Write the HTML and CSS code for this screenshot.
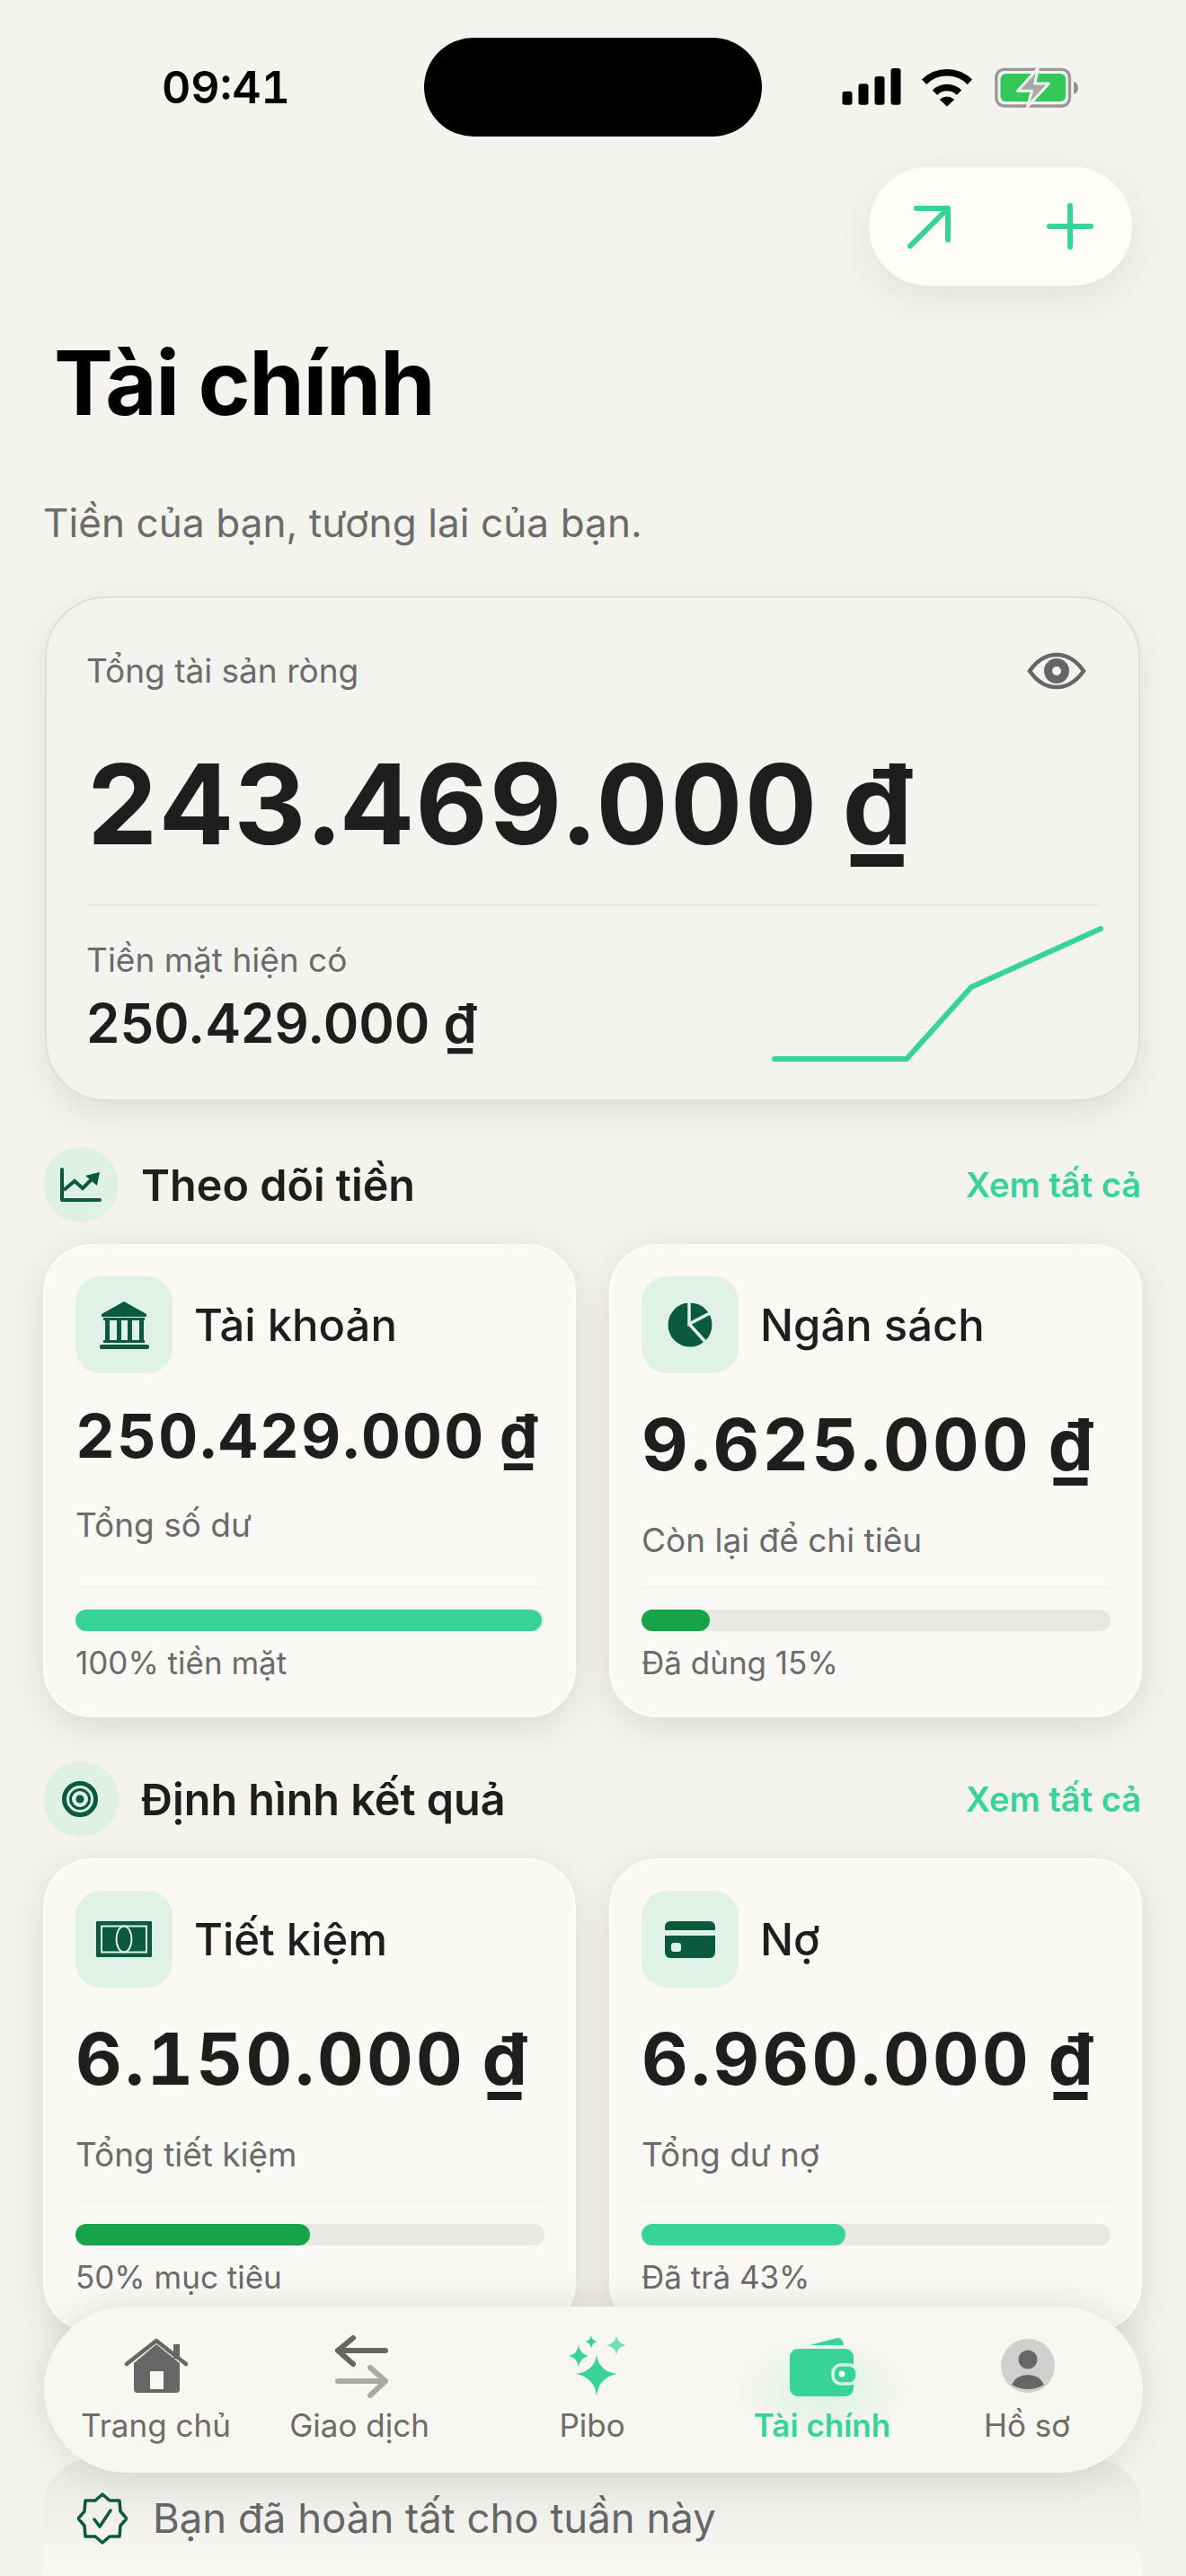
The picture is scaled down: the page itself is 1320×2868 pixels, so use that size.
FILE: index.html
```html
<!DOCTYPE html>
<html lang="vi">
<head>
    <meta charset="UTF-8">
    <meta name="viewport" content="width=device-width, initial-scale=1.0">
    <title>Tài chính</title>
    <link rel="stylesheet" href="styles.css">
</head>
<body>
    <!-- Thanh trạng thái -->
    <div class="status">
        <span class="time">09:41</span>
        <div class="island"></div>
        <div class="status-icons">
            <svg width="66" height="42" viewBox="172 108 195 126"><rect x="172" y="185" width="33" height="45" rx="8"/><rect x="226" y="160" width="33" height="70" rx="8"/><rect x="280" y="135" width="33" height="95" rx="8"/><rect x="334" y="108" width="33" height="122" rx="8"/></svg>
            <svg width="58" height="43" viewBox="432 102 176 130"><g fill="none" stroke="#000" stroke-width="23"><path d="M443 148 A109 109 0 0 1 597 148"/><path d="M479 184 A58 58 0 0 1 561 184"/></g><path d="M520 231 L495 207 Q520 188 545 207Z"/></svg>
            <svg class="battery" width="97" height="48" viewBox="670 95 290 144"><rect x="681" y="108" width="245" height="122" rx="26" fill="none" stroke="#999896" stroke-width="10"/><rect x="695" y="122" width="218" height="93" rx="18" fill="#34c759"/><path d="M940 148 Q954 152 954 169 Q954 186 940 190Z" fill="#8f8e8c"/><path d="M820 105 L752 180 H800 L785 232 L857 155 H810Z" fill="#a9a8a6" stroke="#f5f3ee" stroke-width="9" stroke-linejoin="round"/></svg>
        </div>
    </div>

    <div class="actions">
        <div class="pill">
            <svg width="52" height="52" viewBox="0 0 52 52"><path d="M5 48 L47 6 M12 6 H47 V41"/></svg>
            <svg width="58" height="58" viewBox="0 0 58 58"><path d="M29 6 V52 M6 29 H52"/></svg>
        </div>
    </div>

    <h1>Tài chính</h1>
    <p class="subtitle">Tiền của bạn, tương lai của bạn.</p>

    <!-- Tổng tài sản -->
    <section class="hero">
        <div class="hero-top">
            <span class="hero-label">Tổng tài sản ròng</span>
            <svg class="eye" width="66" height="42" viewBox="0 0 66 42"><path d="M3 21 C12 8 22 3 33 3 C44 3 54 8 63 21 C54 34 44 39 33 39 C22 39 12 34 3 21Z" fill="none" stroke="#666" stroke-width="4.5"/><circle cx="33" cy="21" r="9.5" fill="none" stroke="#666" stroke-width="9"/></svg>
        </div>
        <div class="hero-amount">243.469.000 ₫</div>
        <div class="hero-bottom">
            <div>
                <div class="hero-label">Tiền mặt hiện có</div>
                <div class="hero-cash">250.429.000 ₫</div>
            </div>
            <svg class="spark" width="369" height="151" viewBox="0 0 369 151"><path d="M3 148 H150 L222 68 L366 3"/></svg>
        </div>
    </section>

    <!-- Theo dõi tiền -->
    <section class="block block-first">
        <div class="block-head">
            <span class="round-icon">
                <svg width="84" height="84" viewBox="0 0 84 84"><path d="M21 25 V59 H63" fill="none" stroke="#0b5a3f" stroke-width="4" stroke-linecap="round" stroke-linejoin="round"/><path d="M23 48 L35 38 L44 46 L54 36" fill="none" stroke="#0b5a3f" stroke-width="4"/><path d="M47 32 L63 28 L60 43Z" fill="#0b5a3f"/></svg>
            </span>
            <h2>Theo dõi tiền</h2>
            <a class="see-all">Xem tất cả</a>
        </div>
        <div class="cards">
            <div class="card">
                <div class="card-head">
                    <span class="square-icon">
                        <svg width="108" height="108" viewBox="0 0 108 108" fill="#0b5a3f"><path d="M54 28 L79 42 V45 H29 V42Z"/><rect x="31" y="46" width="46" height="3"/><rect x="33" y="49" width="5" height="22"/><rect x="46" y="49" width="5" height="22"/><rect x="58" y="49" width="5" height="22"/><rect x="71" y="49" width="5" height="22"/><rect x="31" y="71" width="46" height="3"/><rect x="27" y="76" width="55" height="5" rx="2"/></svg>
                    </span>
                    <span class="card-title">Tài khoản</span>
                </div>
                <div class="value value-small">250.429.000 ₫</div>
                <div class="note">Tổng số dư</div>
                <div class="card-foot">
                    <div class="track"><div class="fill fill-mint" style="width:99.5%"></div></div>
                    <div class="caption">100% tiền mặt</div>
                </div>
            </div>
            <div class="card">
                <div class="card-head">
                    <span class="square-icon">
                        <svg width="108" height="108" viewBox="0 0 108 108"><circle cx="54" cy="54" r="24.5" fill="#0b5a3f"/><path d="M53 28 V53 L78 40 M53 53 L72 74" fill="none" stroke="#e0f2e8" stroke-width="3.5"/></svg>
                    </span>
                    <span class="card-title">Ngân sách</span>
                </div>
                <div class="value">9.625.000 ₫</div>
                <div class="note">Còn lại để chi tiêu</div>
                <div class="card-foot">
                    <div class="track"><div class="fill fill-green" style="width:14.6%"></div></div>
                    <div class="caption">Đã dùng 15%</div>
                </div>
            </div>
        </div>
    </section>

    <!-- Định hình kết quả -->
    <section class="block">
        <div class="block-head">
            <span class="round-icon">
                <svg width="84" height="84" viewBox="0 0 84 84" fill="none" stroke="#0b5a3f"><circle cx="41" cy="42" r="17.5" stroke-width="5"/><circle cx="41" cy="42" r="10.5" stroke-width="3"/><circle cx="41" cy="42" r="4.5" fill="#0b5a3f" stroke="none"/></svg>
            </span>
            <h2>Định hình kết quả</h2>
            <a class="see-all">Xem tất cả</a>
        </div>
        <div class="cards">
            <div class="card">
                <div class="card-head">
                    <span class="square-icon">
                        <svg width="108" height="108" viewBox="0 0 108 108"><rect x="23" y="34" width="62" height="40" fill="#0b5a3f" rx="1"/><g fill="none" stroke="#e0f2e8" stroke-width="2"><rect x="29" y="39.5" width="50" height="29"/><ellipse cx="54" cy="54" rx="8.5" ry="14.5"/></g></svg>
                    </span>
                    <span class="card-title">Tiết kiệm</span>
                </div>
                <div class="value">6.150.000 ₫</div>
                <div class="note">Tổng tiết kiệm</div>
                <div class="card-foot">
                    <div class="track"><div class="fill fill-green" style="width:50%"></div></div>
                    <div class="caption">50% mục tiêu</div>
                </div>
            </div>
            <div class="card">
                <div class="card-head">
                    <span class="square-icon">
                        <svg width="108" height="108" viewBox="0 0 108 108"><rect x="26" y="34" width="56" height="41" rx="6" fill="#0b5a3f"/><rect x="26" y="44" width="56" height="6" fill="#e0f2e8"/><rect x="33" y="58" width="11" height="10" rx="3" fill="#e0f2e8"/></svg>
                    </span>
                    <span class="card-title">Nợ</span>
                </div>
                <div class="value">6.960.000 ₫</div>
                <div class="note">Tổng dư nợ</div>
                <div class="card-foot">
                    <div class="track"><div class="fill fill-mint" style="width:43.5%"></div></div>
                    <div class="caption">Đã trả 43%</div>
                </div>
            </div>
        </div>
    </section>

    <div class="done">
        <svg width="56" height="58" viewBox="-28 -29 56 58"><path d="M0 -27 L8 -20 L19 -20 L20 -8 L27 0 L20 8 L19 20 L8 20 L0 27 L-8 20 L-19 20 L-20 8 L-27 0 L-20 -8 L-19 -20 L-8 -20Z" fill="none" stroke="#0b5a3f" stroke-width="3.5" stroke-linejoin="round"/><path d="M-9 1 L-3 9 L9 -9" fill="none" stroke="#0b5a3f" stroke-width="3.5" stroke-linecap="round" stroke-linejoin="round"/></svg>
        <span>Bạn đã hoàn tất cho tuần này</span>
    </div>

    <!-- Thanh điều hướng -->
    <nav class="tabbar">
        <div class="tab">
            <svg width="80" height="70" viewBox="134 2600 80 70"><path d="M149 2631 L174 2610 L200 2631 V2660 Q200 2664 196 2664 H153 Q149 2664 149 2660Z" fill="#666"/><rect x="167" y="2640" width="15" height="20" fill="#f9f7f2"/><path d="M141 2632 L174 2606 L207 2632" fill="none" stroke="#666" stroke-width="4.5" stroke-linecap="round" stroke-linejoin="round"/><rect x="193" y="2610" width="7" height="16" fill="#666"/></svg>
            <span>Trang chủ</span>
        </div>
        <div class="tab">
            <svg width="80" height="70" viewBox="360 2600 80 70" fill="none" stroke-width="6" stroke-linecap="round" stroke-linejoin="round"><path d="M429 2617 H376 M393 2603 L376 2617 L393 2632" stroke="#666"/><path d="M376 2651 H429 M412 2636 L429 2651 L412 2667" stroke="#aaa9a6"/></svg>
            <span>Giao dịch</span>
        </div>
        <div class="tab">
            <svg width="80" height="70" viewBox="619 2600 80 70" fill="#37d39a"><path d="M664 2621 Q666 2640 687 2643 Q666 2647 664 2668 Q662 2647 641 2643 Q662 2640 664 2621Z"/><path d="M644 2610 Q645 2621 655 2623 Q645 2625 644 2636 Q643 2625 633 2623 Q643 2621 644 2610Z"/><path d="M658 2600 Q659 2606 665 2607 Q659 2608 658 2615 Q657 2608 651 2607 Q657 2606 658 2600Z"/><path d="M686 2600 Q687 2609 697 2611 Q687 2613 686 2622 Q685 2613 675 2611 Q685 2609 686 2600Z" fill="#6fdfb6"/></svg>
            <span>Pibo</span>
        </div>
        <div class="tab tab-active">
            <svg width="80" height="70" viewBox="875 2600 80 70"><path d="M901 2611 L932 2603 Q938 2602 939 2611Z" fill="#37d39a"/><rect x="879" y="2615" width="71" height="53" rx="9" fill="#37d39a"/><rect x="927" y="2633" width="27" height="21" rx="9" fill="#37d39a" stroke="#d8f5ea" stroke-width="3.5"/><circle cx="937" cy="2643" r="3.5" fill="#f9f7f2"/></svg>
            <span>Tài chính</span>
        </div>
        <div class="tab">
            <svg width="80" height="70" viewBox="1104 2600 80 70"><circle cx="1145" cy="2634" r="30" fill="#d0d0ce"/><circle cx="1145" cy="2627" r="10.5" fill="#666"/><path d="M1127 2655 Q1132 2644 1145 2644 Q1158 2644 1163 2655 Q1155 2660 1145 2660 Q1135 2660 1127 2655Z" fill="#666"/></svg>
            <span>Hồ sơ</span>
        </div>
    </nav>
</body>
</html>
```

FILE: styles.css
```css
* { box-sizing: border-box; }
html, body { margin: 0; padding: 0; }
body { position: relative; width: 1320px; height: 2868px; overflow: hidden; background: #f5f3ee; color: #1e1e1e; font-family: Inter, "Noto Sans", sans-serif; }
svg { display: block; flex: none; }

/* status bar */
.status { display: grid; grid-template-columns: 472px 376px 1fr; padding-top: 42px; }
.time { padding-left: 180px; align-self: center; color: #000; font-size: 50px; font-weight: 600; font-variant-numeric: tabular-nums; }
.island { height: 110px; background: #000; border-radius: 55px; }
.status-icons { display: flex; align-items: center; padding-left: 89px; gap: 22px; }

.actions { display: flex; justify-content: flex-end; margin-top: 34px; padding-right: 60px; }
.pill { display: flex; align-items: center; width: 293px; height: 132px; padding: 0 40px 0 41px; justify-content: space-between; background: #fefdf8; border-radius: 66px; box-shadow: 0 14px 44px rgba(60, 55, 40, .09); }
.pill path { fill: none; stroke: #37d39a; stroke-width: 6; stroke-linecap: round; stroke-linejoin: round; }

h1 { margin: 50px 0 0 60px; font-size: 99px; line-height: 116px; font-weight: 700; color: #000; letter-spacing: -1.5px; }
.subtitle { margin: 71px 0 0 48px; font-size: 44px; line-height: 54px; color: #6b6b6b; letter-spacing: .1px; }

/* hero card */
.hero { width: 1219px; margin: 55px 0 0 50px; padding: 58px 44px 42px 44px; background: #f3f3f0; border: 2px solid #dfdeda; border-radius: 68px; box-shadow: 0 14px 36px rgba(60, 55, 40, .1); }
.hero-top { display: flex; justify-content: space-between; align-items: center; }
.hero-label { font-size: 37px; line-height: 46px; color: #6b6b6b; }
.eye { margin-right: 14px; }
.hero-amount { margin-top: 50px; font-size: 124px; line-height: 150px; font-weight: 700; letter-spacing: 2.5px; word-spacing: -10px; white-space: nowrap; font-variant-numeric: tabular-nums; }
.hero-bottom { display: flex; justify-content: space-between; margin-top: 37px; padding-top: 38px; border-top: 1.5px solid #e2e2df; }
.hero-cash { margin-top: 11px; font-size: 60px; line-height: 72px; font-weight: 600; }
.spark { margin: -15px -5px 0 0; }
.spark path { fill: none; stroke: #37d39a; stroke-width: 6; stroke-linecap: round; stroke-linejoin: round; }

/* sections */
.block { margin-top: 49px; padding-left: 48px; }
.block-first { margin-top: 51px; }
.block-head { display: flex; align-items: center; gap: 25px; height: 84px; padding-right: 50px; }
.round-icon { width: 84px; height: 84px; border-radius: 50%; background: #dff0e6; }
h2 { flex: 1; margin: 0; font-size: 48.5px; font-weight: 600; }
.see-all { font-size: 38px; font-weight: 600; color: #37d39a; }

.cards { display: grid; grid-template-columns: 593px 593px; gap: 37px; margin-top: 24px; }
.card { display: flex; flex-direction: column; height: 527px; padding: 34px 33px 38px 34px; background: #faf9f5; border: 2px solid #fdfdfb; border-radius: 54px; box-shadow: 0 10px 40px rgba(60, 55, 40, .13); }
.card-head { display: flex; align-items: center; gap: 24px; }
.square-icon { width: 108px; height: 108px; border-radius: 28px; background: #e0f2e8; }
.card-title { font-size: 49px; font-weight: 500; }
.value { margin-top: 30px; font-size: 80px; line-height: 97px; font-weight: 700; letter-spacing: 3.2px; word-spacing: -6px; white-space: nowrap; font-variant-numeric: tabular-nums; }
.value-small { margin-top: 28px; font-size: 68px; line-height: 82px; letter-spacing: 2.2px; word-spacing: -5px; }
.note { margin-top: 36px; font-size: 37px; line-height: 45px; color: #6b6b6b; }
.card-foot { margin-top: auto; padding-top: 24px; border-top: 1.5px solid #efeeea; }
.track { height: 24px; border-radius: 12px; background: #e8e8e5; }
.fill { height: 100%; border-radius: 12px; }
.fill-mint { background: #37d39a; }
.fill-green { background: #16a34a; }
.caption { margin-top: 14px; font-size: 35px; line-height: 42px; color: #6b6b6b; }

.done { display: flex; align-items: flex-start; gap: 28px; width: 1223px; height: 240px; margin: 142px 0 0 48px; padding: 37px 0 0 38px; font-size: 45.5px; line-height: 58px; color: #666; background: linear-gradient(#e7e7e3, #faf9f5 130px); border-radius: 54px; }

/* tab bar floats over the page */
.tabbar { position: absolute; left: 49px; top: 2568px; display: grid; grid-template-columns: 249px 204px 314px 198px 258px; width: 1223px; height: 185px; padding-top: 32px; background: #f9f7f2; border-radius: 92px; box-shadow: 0 0 40px rgba(60, 55, 40, .14); }
.tab { display: flex; flex-direction: column; align-items: center; font-size: 35px; line-height: 42px; color: #6e6c68; }
.tab span { margin-top: 9px; white-space: nowrap; }
.tab-active { color: #37d39a; font-weight: 600; background: radial-gradient(closest-side at 50% 40%, rgba(55, 211, 154, .16), rgba(55, 211, 154, 0)); }
```
